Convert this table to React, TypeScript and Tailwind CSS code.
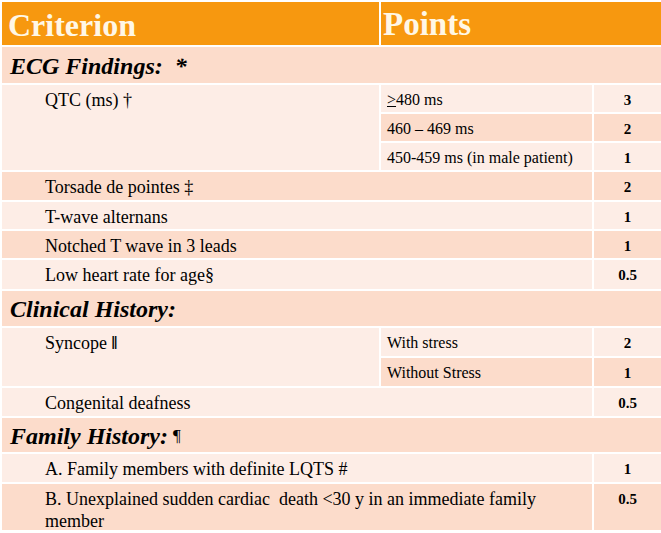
import React from "react";

const dark = "bg-[#fcdccb]";
const light = "bg-[#fdede6]";
const serif = "font-['Liberation_Serif','Times_New_Roman',serif]";

function Main({ children, bg, span = "", rows = "" }: { children: React.ReactNode; bg: string; span?: string; rows?: string }) {
  return <div className={`${bg} ${span} ${rows} ${serif} pl-[43px] pt-[4px] text-[18px] leading-[22px] text-black`}>{children}</div>;
}

function Sub({ children, bg }: { children: React.ReactNode; bg: string }) {
  return <div className={`${bg} ${serif} pl-[6px] pt-[5px] text-[16px] leading-[20px] text-black`}>{children}</div>;
}

function Pts({ children, bg }: { children: React.ReactNode; bg: string }) {
  return <div className={`${bg} ${serif} pt-[5px] text-center text-[15px] leading-[20px] font-bold text-black`}>{children}</div>;
}

function Section({ children }: { children: React.ReactNode }) {
  return (
    <div className={`${dark} ${serif} col-span-3 flex items-center pl-[8px] pt-[1px] text-[24px] font-bold italic text-black`}>
      {children}
    </div>
  );
}

export default function App() {
  return (
    <div className={`w-[661px] h-[533px] bg-white pl-[2px] pt-[2px] ${serif}`}>
      <div className="grid grid-cols-[377px_211px_1fr] grid-rows-[43px_36px_27px_27px_27px_28px_27px_27px_29px_35px_28px_28px_28px_34px_28px_46px] gap-x-[2px] gap-y-[2px] bg-white">
        <div className={`bg-[#f7980f] ${serif} flex items-center pl-[6px] pt-[2px] text-[32px] font-bold text-[#fff7e6]`}>Criterion</div>
        <div className={`bg-[#f7980f] ${serif} col-span-2 flex items-center pl-[2px] pt-[2px] text-[33px] font-bold text-[#fff7e6]`}>Points</div>

        <Section>ECG Findings:&nbsp;&nbsp;*</Section>

        <Main bg={light} rows="row-span-3">QTC (ms) †</Main>
        <Sub bg={light}><span className="underline">&gt;</span>480 ms</Sub>
        <Pts bg={light}>3</Pts>
        <Sub bg={dark}>460 – 469 ms</Sub>
        <Pts bg={dark}>2</Pts>
        <Sub bg={light}>450-459 ms (in male patient)</Sub>
        <Pts bg={light}>1</Pts>

        <Main bg={dark} span="col-span-2">Torsade de pointes ‡</Main>
        <Pts bg={dark}>2</Pts>
        <Main bg={light} span="col-span-2">T-wave alternans</Main>
        <Pts bg={light}>1</Pts>
        <Main bg={dark} span="col-span-2">Notched T wave in 3 leads</Main>
        <Pts bg={dark}>1</Pts>
        <Main bg={light} span="col-span-2">Low heart rate for age§</Main>
        <Pts bg={light}>0.5</Pts>

        <Section>Clinical History:</Section>

        <Main bg={light} rows="row-span-2">Syncope <span className="font-bold">‖</span></Main>
        <Sub bg={light}>With stress</Sub>
        <Pts bg={light}>2</Pts>
        <Sub bg={dark}>Without Stress</Sub>
        <Pts bg={dark}>1</Pts>
        <Main bg={light} span="col-span-2">Congenital deafness</Main>
        <Pts bg={light}>0.5</Pts>

        <Section>
          Family History: <span className="ml-[5px] text-[17px] font-normal not-italic">¶</span>
        </Section>

        <Main bg={light} span="col-span-2">A. Family members with definite LQTS #</Main>
        <Pts bg={light}>1</Pts>
        <Main bg={dark} span="col-span-2">
          B. Unexplained sudden cardiac&nbsp; death &lt;30 y in an immediate family
          <br />
          member
        </Main>
        <Pts bg={dark}>0.5</Pts>
      </div>
    </div>
  );
}
